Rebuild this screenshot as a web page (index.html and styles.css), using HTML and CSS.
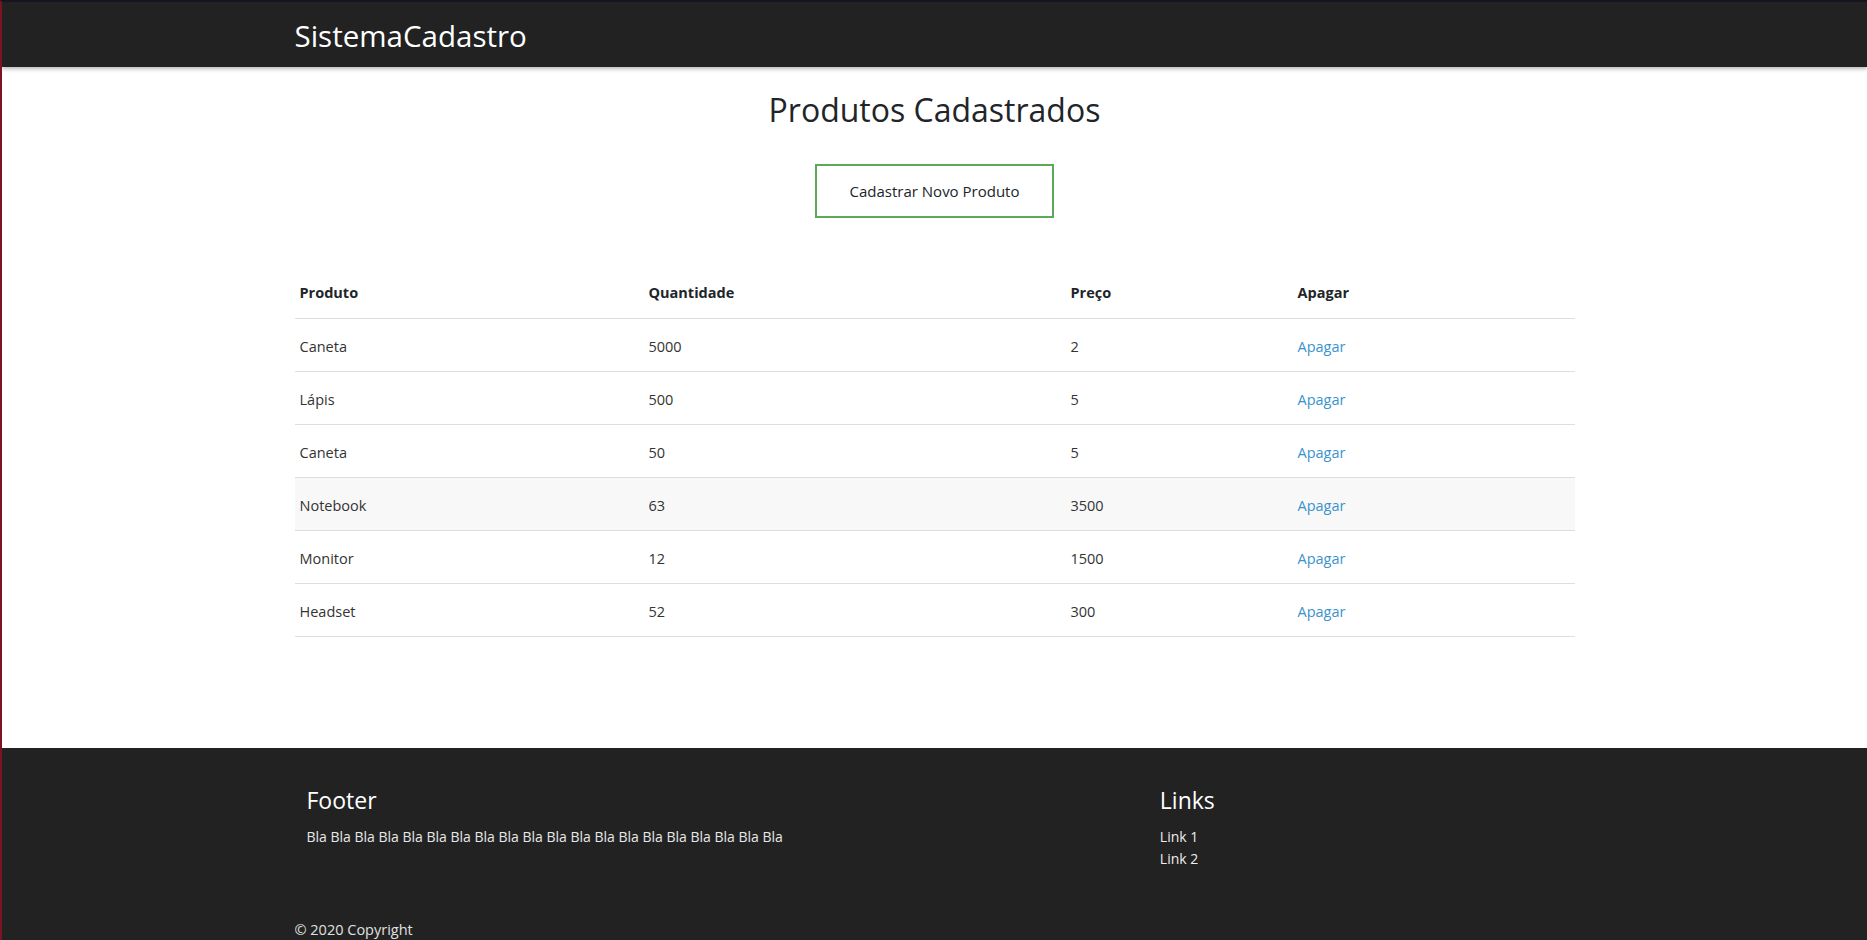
FILE: index.html
```html
<!DOCTYPE html>
<html lang="pt-BR">
<head>
<meta charset="utf-8">
<title>SistemaCadastro</title>
<link rel="stylesheet" href="styles.css">
</head>
<body>
<header class="navbar">
  <div class="container">
    <a class="brand" href="#">SistemaCadastro</a>
  </div>
</header>
<main class="container main">
  <h1 class="title">Produtos Cadastrados</h1>
  <div class="actions">
    <a class="btn-new" href="#">Cadastrar Novo Produto</a>
  </div>
  <table class="table">
    <colgroup>
      <col class="c1"><col class="c2"><col class="c3"><col class="c4">
    </colgroup>
    <thead>
      <tr><th>Produto</th><th>Quantidade</th><th>Preço</th><th>Apagar</th></tr>
    </thead>
    <tbody>
      <tr><td>Caneta</td><td>5000</td><td>2</td><td><a class="link" href="#">Apagar</a></td></tr>
      <tr><td>Lápis</td><td>500</td><td>5</td><td><a class="link" href="#">Apagar</a></td></tr>
      <tr><td>Caneta</td><td>50</td><td>5</td><td><a class="link" href="#">Apagar</a></td></tr>
      <tr class="hover"><td>Notebook</td><td>63</td><td>3500</td><td><a class="link" href="#">Apagar</a></td></tr>
      <tr><td>Monitor</td><td>12</td><td>1500</td><td><a class="link" href="#">Apagar</a></td></tr>
      <tr><td>Headset</td><td>52</td><td>300</td><td><a class="link" href="#">Apagar</a></td></tr>
    </tbody>
  </table>
</main>
<footer class="footer">
  <div class="container">
    <div class="row">
      <div class="col-8">
        <h5 class="f-title">Footer</h5>
        <p class="f-text">Bla Bla Bla Bla Bla Bla Bla Bla Bla Bla Bla Bla Bla Bla Bla Bla Bla Bla Bla Bla</p>
      </div>
      <div class="col-4">
        <h5 class="f-title">Links</h5>
        <ul class="f-links">
          <li><a href="#">Link 1</a></li>
          <li><a href="#">Link 2</a></li>
        </ul>
      </div>
    </div>
    <div class="copy">© 2020 Copyright</div>
  </div>
</footer>
</body>
</html>
```

FILE: styles.css
```css
* { box-sizing: border-box; }
html, body { margin: 0; padding: 0; }
body {
  font-family: "Open Sans", "Noto Sans", sans-serif;
  color: #212529;
  background: #fff;
  border-top: 2px solid #16151d;
  border-left: 2px solid #7a1322;
  min-height: 940px;
  overflow: hidden;
}
.container {
  width: 1280px;
  margin: 0 auto;
}
.navbar {
  height: 65px;
  background: #222222;
  display: flex;
  align-items: center;
  box-shadow: 0 2px 4px rgba(0,0,0,0.28);
  position: relative;
}
.brand {
  color: #fff;
  text-decoration: none;
  font-size: 29.5px;
  line-height: 36px;
  display: inline-block;
  margin-top: 3px;
}
.title {
  margin: 24px 0 0;
  font-size: 32px;
  line-height: 38px;
  font-weight: 400;
  text-align: center;
  color: #212529;
}
.actions {
  display: flex;
  justify-content: center;
  margin-top: 35px;
}
.btn-new {
  display: inline-block;
  border: 2px solid #5aaa5a;
  padding: 14px 33px;
  font-size: 15px;
  line-height: 22px;
  color: #212529;
  text-decoration: none;
}
.table {
  width: 100%;
  margin-top: 48px;
  border-collapse: collapse;
  font-size: 14.5px;
}
.c1 { width: 349px; }
.c2 { width: 422px; }
.c3 { width: 227px; }
.c4 { width: 282px; }
.table th, .table td {
  text-align: left;
  padding: 16px 5px 15px;
  line-height: 21px;
  border-bottom: 1px solid #dcdfe2;
}
.table td { padding: 17px 5px 14px; color: #333; }
.table th { font-weight: 700; color: #212529; }
.table tr.hover td { background: #f8f8f8; }
.link { color: #3a93cc; text-decoration: none; }
.footer {
  margin-top: 111px;
  background: #222222;
  color: #fff;
  padding-top: 38px;
  height: 200px;
}
.row { display: flex; }
.col-8 { width: 66.6667%; padding: 0 12px; }
.col-4 { width: 33.3333%; padding: 0 12px; }
.f-title {
  margin: 0 0 11px;
  font-size: 23px;
  line-height: 29px;
  font-weight: 400;
  color: #fff;
}
.f-text {
  margin: 0;
  font-size: 14px;
  line-height: 21px;
  color: #e8e8e8;
}
.f-links {
  list-style: none;
  margin: 0;
  padding: 0;
  font-size: 14px;
  line-height: 22px;
}
.f-links a { color: #eeeeee; text-decoration: none; }
.copy {
  margin-top: 49px;
  font-size: 14.5px;
  line-height: 22px;
  color: #e0e0e0;
}
```
